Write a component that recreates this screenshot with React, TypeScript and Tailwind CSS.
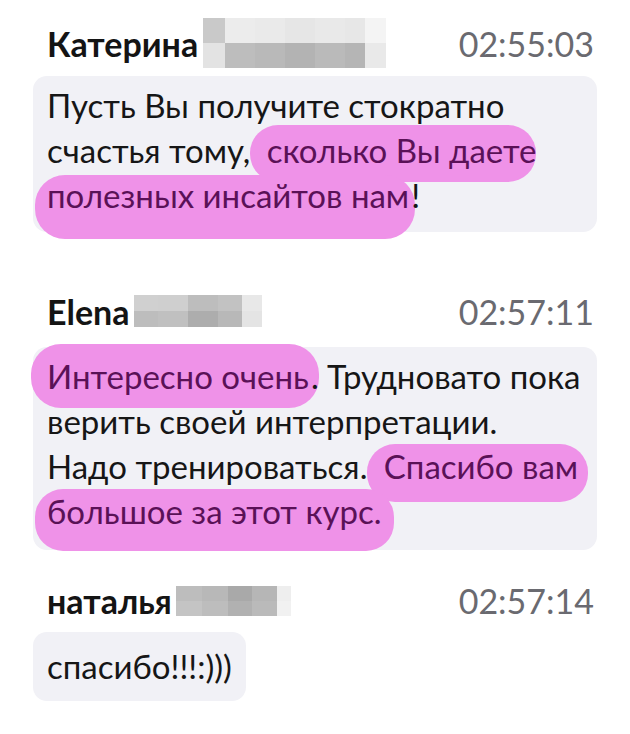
import React from "react";

const HL = "bg-[#ef92e8] text-[#5a1157] rounded-[26px]";

function Blur({ cols, top, bottom, w, h }: { cols: number[]; top: string[]; bottom: string[]; w: number; h: number }) {
  return (
    <div className="flex flex-col shrink-0" style={{ width: w, height: h }}>
      <div className="flex flex-1">
        {cols.map((c, i) => (
          <div key={i} style={{ width: c, background: top[i] }} />
        ))}
      </div>
      <div className="flex flex-1">
        {cols.map((c, i) => (
          <div key={i} style={{ width: c, background: bottom[i] }} />
        ))}
      </div>
    </div>
  );
}

function Header({ name, time, blur, gap }: { name: string; time: string; blur: React.ReactNode; gap: string }) {
  return (
    <div className="flex h-[36px] items-center justify-between pl-[14px] pr-[3px]">
      <div className={"flex h-[36px] items-center " + gap}>
        <span className="text-[34px] font-bold leading-[36px] text-[#141414]">{name}</span>
        {blur}
      </div>
      <span className="text-[34px] leading-[36px] text-[#6a6a70]">{time}</span>
    </div>
  );
}

const BUBBLE = "bg-[#f1f1f6] rounded-[14px] pl-[14px] pr-[4px] text-[33px] leading-[45px] text-[#161616] whitespace-nowrap";

export default function App() {
  return (
    <div className="w-[630px] h-[734px] bg-white overflow-hidden px-[33px] pt-[26px]" style={{ fontFamily: "Lato, 'Open Sans', sans-serif" }}>
      <Header
        name="Катерина"
        time="02:55:03"
        gap="gap-[5px]"
        blur={
          <div className="-mt-[3px]">
            <Blur
              w={183}
              h={50}
              cols={[22, 30, 30, 30, 30, 20, 21]}
              top={["#c9c9c9", "#ececec", "#eaeaea", "#e6e6e6", "#e9e9e9", "#e7e7e7", "#f4f4f4"]}
              bottom={["#e3e3e3", "#bdbdbd", "#b9b9b9", "#b3b3b3", "#bababa", "#b5b5b5", "#e9e9e9"]}
            />
          </div>
        }
      />
      <div className={"mt-[14px] pt-[7px] pb-[14px] " + BUBBLE}>
        Пусть Вы получите стократно
        <br />
        счастья тому,<span className={HL + " pl-[8px] pr-[0px] pt-[5px] pb-[12px] rounded-[28px]"}> сколько Вы даете</span>
        <br />
        <span className={HL + " -ml-[12px] pl-[12px] pr-[6px] pt-[0px] pb-[24px] rounded-[30px]"}>полезных инсайтов нам</span>
        <span className="-ml-[4px]">!</span>
      </div>

      <div className="mt-[62px]">
        <Header
          name="Elena"
          time="02:57:11"
          gap="gap-[4px]"
          blur={
            <div className="-mt-[3px]">
              <Blur
                w={128}
                h={32}
                cols={[24, 30, 30, 24, 20]}
                top={["#d0d0d0", "#cfcfcf", "#bdbdbd", "#c2c2c2", "#e8e8e8"]}
                bottom={["#bdbdbd", "#c0c0c0", "#adadad", "#b8b8b8", "#e4e4e4"]}
              />
            </div>
          }
        />
      </div>
      <div className={"mt-[17px] pt-[7px] pb-[16px] " + BUBBLE}>
        <span className={HL + " -ml-[16px] pl-[16px] pr-[10px] pt-[12px] pb-[12px] rounded-[30px]"}>Интересно очень</span>
        <span className="-ml-[8px]">. Трудновато пока</span>
        <br />
        верить своей интерпретации.
        <br />
        Надо тренироваться.<span className={HL + " pl-[8px] pr-[10px] pt-[2px] pb-[16px] rounded-[28px]"}> Спасибо вам</span>
        <br />
        <span className={HL + " -ml-[12px] pl-[12px] pr-[12px] pt-[2px] pb-[20px] rounded-[28px]"}>большое за этот курс.</span>
      </div>

      <div className="mt-[33px]">
        <Header
          name="наталья"
          time="02:57:14"
          gap="gap-[4px]"
          blur={
            <Blur
              w={115}
              h={30}
              cols={[26, 26, 24, 25, 14]}
              top={["#bdbdbd", "#b8b8b8", "#a9a9a9", "#b6b6b6", "#eeeeee"]}
              bottom={["#c4c4c4", "#bdbdbd", "#b1b1b1", "#bababa", "#f1f1f1"]}
            />
          }
        />
      </div>
      <div className={"mt-[13px] inline-block py-[12px] !pr-[14px] " + BUBBLE}>спасибо!!!:)))</div>
    </div>
  );
}
